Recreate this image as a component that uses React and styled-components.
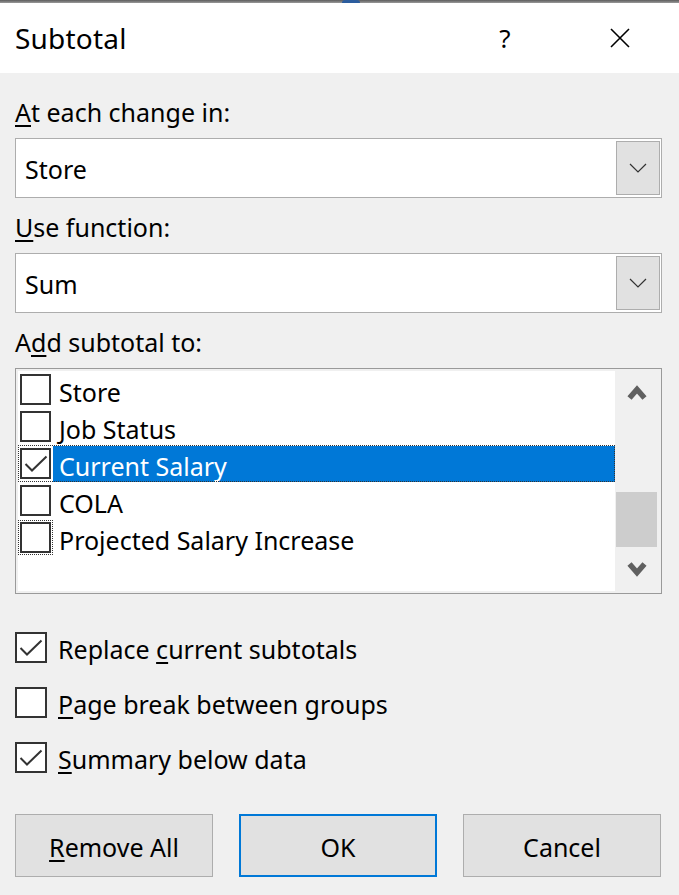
import React, { useState } from "react";
import styled, { createGlobalStyle } from "styled-components";

const GlobalStyle = createGlobalStyle`
  * {
    box-sizing: border-box;
  }
  body {
    margin: 0;
    background: #f0f0f0;
    font-family: "Noto Sans", "Open Sans", sans-serif;
    color: #000;
  }
`;

const Dialog = styled.div`
  width: 679px;
  height: 895px;
  display: flex;
  flex-direction: column;
  background: #f0f0f0;
  overflow: hidden;
`;

const TopEdge = styled.div`
  height: 3px;
  background: linear-gradient(#5c5c5c, #9a9a9a);
  display: flex;
  justify-content: flex-start;
  padding-left: 342px;
`;

const TopEdgeBlip = styled.span`
  width: 18px;
  height: 3px;
  border-radius: 9px 9px 0 0;
  background: #2c5d9e;
`;

const TitleBar = styled.div`
  height: 70px;
  background: #fff;
  display: flex;
  align-items: center;
  padding-left: 15px;
`;

const TitleText = styled.div`
  flex: 1;
  font-size: 28px;
  line-height: 1;
  letter-spacing: 0.2px;
`;

const HelpButton = styled.button`
  border: none;
  background: transparent;
  font-family: inherit;
  font-size: 26px;
  line-height: 1;
  padding: 0 0 0 6px;
  width: 30px;
  margin-right: 92px;
  color: #000;
`;

const CloseButton = styled.button`
  border: none;
  background: transparent;
  padding: 0;
  width: 22px;
  height: 22px;
  margin-right: 48px;
  display: flex;
  align-items: center;
  justify-content: center;
`;

const Body = styled.div`
  padding: 24px 17px 0 15px;
  display: flex;
  flex-direction: column;
`;

const FieldLabel = styled.div`
  font-size: 25px;
  line-height: 30px;
  margin-top: ${(p) => (p.$first ? "0" : "14px")};
  margin-bottom: 11px;
`;

const Key = styled.span`
  text-decoration: underline;
  text-decoration-thickness: 2px;
  text-underline-offset: 3px;
`;

const SelectBox = styled.div`
  height: 60px;
  border: 1px solid #adadad;
  background: #fff;
  display: flex;
  align-items: stretch;
`;

const SelectValue = styled.div`
  flex: 1;
  display: flex;
  align-items: center;
  padding: 2px 0 0 9px;
  font-size: 25px;
`;

const DropButton = styled.div`
  width: 44px;
  margin: 2px 1px 2px 0;
  background: #e1e1e1;
  border: 1px solid #adadad;
  display: flex;
  align-items: center;
  justify-content: center;
`;

const ListBox = styled.div`
  height: 226px;
  border: 1px solid #9a9a9a;
  padding: 2px;
  background: #f0f0f0;
  display: flex;
`;

const ListItems = styled.div`
  flex: 1;
  background: #fff;
  display: flex;
  flex-direction: column;
`;

const ListRow = styled.div`
  height: 37px;
  display: flex;
  align-items: center;
  padding-left: 2px;
  outline: ${(p) => (p.$focused ? "1px dotted #333" : "none")};
  outline-offset: -1px;
`;

const ItemText = styled.div`
  flex: 1;
  align-self: stretch;
  display: flex;
  align-items: center;
  margin: 1px 0 0 2px;
  padding: 3px 0 0 6px;
  font-size: 25px;
  background: ${(p) => (p.$selected ? "#0078d7" : "transparent")};
  color: ${(p) => (p.$selected ? "#fff" : "#000")};
`;

const Box = styled.span`
  width: ${(p) => (p.$wide ? "32px" : "31px")};
  height: 31px;
  flex: none;
  border: 2px solid #333;
  background: #fff;
  display: flex;
  align-items: center;
  justify-content: center;
  outline: ${(p) => (p.$dotted ? "1px dotted #333" : "none")};
  outline-offset: 1px;
`;

const ScrollBar = styled.div`
  width: 44px;
  background: #f0f0f0;
  display: flex;
  flex-direction: column;
`;

const ScrollArrow = styled.div`
  height: 42px;
  display: flex;
  align-items: center;
  justify-content: center;
`;

const ScrollTrack = styled.div`
  flex: 1;
  display: flex;
  flex-direction: column;
`;

const ScrollThumb = styled.div`
  margin: 79px 2px 0 1px;
  height: 55px;
  background: #cdcdcd;
`;

const Options = styled.div`
  margin-top: 38px;
  display: flex;
  flex-direction: column;
  gap: 24px;
`;

const OptionRow = styled.label`
  display: flex;
  align-items: center;
  gap: 11px;
  height: 31px;
  font-size: 25px;
  cursor: default;
`;

const OptionText = styled.span`
  padding-top: 3px;
`;

const ButtonRow = styled.div`
  margin-top: 41px;
  display: flex;
  gap: 26px;
`;

const DialogButton = styled.button`
  width: 198px;
  height: 63px;
  background: #e1e1e1;
  border: ${(p) => (p.$primary ? "2px solid #0078d7" : "1px solid #adadad")};
  font-family: inherit;
  font-size: 25px;
  color: #000;
  padding: 2px 0 0;
`;

const Check = () => (
  <svg width="24" height="18" viewBox="0 0 24 18">
    <polyline
      points="1.5,9 8,15.5 22.5,1.5"
      fill="none"
      stroke="#333"
      strokeWidth="2"
    />
  </svg>
);

const Chevron = () => (
  <svg width="18" height="10" viewBox="0 0 18 10">
    <polyline points="1,1 9,9 17,1" fill="none" stroke="#333" strokeWidth="1.2" />
  </svg>
);

const ScrollChevron = ({ down }) => (
  <svg width="22" height="18" viewBox="0 0 22 18">
    <polyline
      points={down ? "3.5,3 11,11.5 18.5,3" : "3.5,15 11,6.5 18.5,15"}
      fill="none"
      stroke="#606060"
      strokeWidth="5.5"
    />
  </svg>
);

const CloseIcon = () => (
  <svg width="20" height="20" viewBox="0 0 20 20">
    <path d="M1 1 L19 19 M19 1 L1 19" stroke="#000" strokeWidth="1.6" />
  </svg>
);

export default function App() {
  const [fields] = useState([
    { name: "Store", checked: false },
    { name: "Job Status", checked: false },
    { name: "Current Salary", checked: true, selected: true },
    { name: "COLA", checked: false },
    { name: "Projected Salary Increase", checked: false, dotted: true },
  ]);

  return (
    <Dialog>
      <GlobalStyle />
      <TopEdge>
        <TopEdgeBlip />
      </TopEdge>
      <TitleBar>
        <TitleText>Subtotal</TitleText>
        <HelpButton>?</HelpButton>
        <CloseButton>
          <CloseIcon />
        </CloseButton>
      </TitleBar>
      <Body>
        <FieldLabel $first>
          <Key>A</Key>t each change in:
        </FieldLabel>
        <SelectBox>
          <SelectValue>Store</SelectValue>
          <DropButton>
            <Chevron />
          </DropButton>
        </SelectBox>

        <FieldLabel>
          <Key>U</Key>se function:
        </FieldLabel>
        <SelectBox>
          <SelectValue>Sum</SelectValue>
          <DropButton>
            <Chevron />
          </DropButton>
        </SelectBox>

        <FieldLabel>
          A<Key>d</Key>d subtotal to:
        </FieldLabel>
        <ListBox>
          <ListItems>
            {fields.map((f) => (
              <ListRow key={f.name} $focused={f.selected}>
                <Box $dotted={f.dotted}>{f.checked && <Check />}</Box>
                <ItemText $selected={f.selected}>{f.name}</ItemText>
              </ListRow>
            ))}
          </ListItems>
          <ScrollBar>
            <ScrollArrow>
              <ScrollChevron />
            </ScrollArrow>
            <ScrollTrack>
              <ScrollThumb />
            </ScrollTrack>
            <ScrollArrow>
              <ScrollChevron down />
            </ScrollArrow>
          </ScrollBar>
        </ListBox>

        <Options>
          <OptionRow>
            <Box $wide>
              <Check />
            </Box>
            <OptionText>
              Replace <Key>c</Key>urrent subtotals
            </OptionText>
          </OptionRow>
          <OptionRow>
            <Box $wide />
            <OptionText>
              <Key>P</Key>age break between groups
            </OptionText>
          </OptionRow>
          <OptionRow>
            <Box $wide>
              <Check />
            </Box>
            <OptionText>
              <Key>S</Key>ummary below data
            </OptionText>
          </OptionRow>
        </Options>

        <ButtonRow>
          <DialogButton>
            <Key>R</Key>emove All
          </DialogButton>
          <DialogButton $primary>OK</DialogButton>
          <DialogButton>Cancel</DialogButton>
        </ButtonRow>
      </Body>
    </Dialog>
  );
}
